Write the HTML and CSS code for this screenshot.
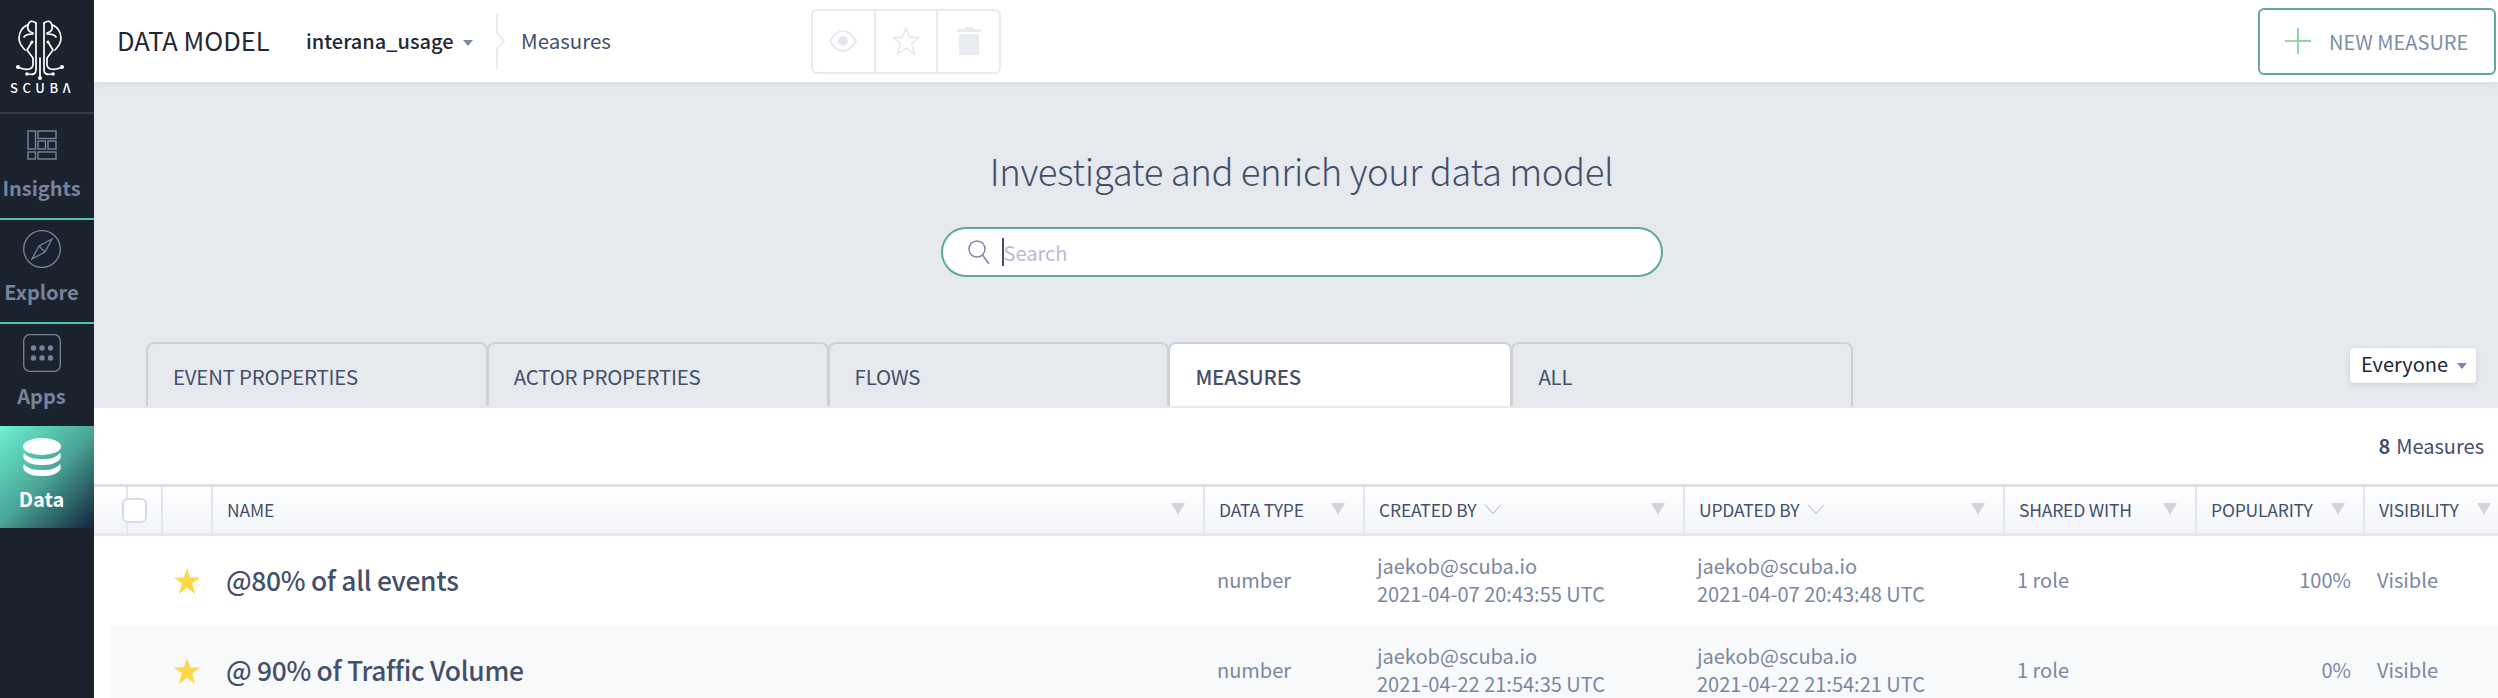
FILE: index.html
```html
<!DOCTYPE html>
<html lang="en">
<head>
    <meta charset="UTF-8">
    <meta name="viewport" content="width=device-width, initial-scale=1.0">
    <title>Data Model</title>
    <link rel="stylesheet" href="styles.css">
</head>
<body>
    <div class="app">
        <nav class="sidebar">
            <div class="logo">
                <svg class="logo-mark" width="94" height="84" viewBox="0 0 94 84" fill="none" stroke="#fff" stroke-width="1.7" stroke-linecap="round" stroke-linejoin="round">
                    <defs>
                        <g id="brainHalf">
                            <path d="M36 23V70C36 74 33 75 28 74"/>
                            <path d="M36 23C32 20 29 21 28 25C23 26 19 32 19 38C19 43 21 46 25 50"/>
                            <path d="M28 25C27 29 29 32 33 33"/>
                            <path d="M24 37C25 35 28 34 33 34"/>
                            <path d="M32 42L27 50L33 58V64C33 69 28 71 20 68"/>
                            <circle cx="18" cy="67" r="2" fill="#fff" stroke="none"/>
                            <circle cx="27" cy="74" r="1.8" fill="#fff" stroke="none"/>
                            <circle cx="32" cy="42" r="1.6" fill="#fff" stroke="none"/>
                        </g>
                    </defs>
                    <use href="#brainHalf"/>
                    <use href="#brainHalf" transform="translate(80 0) scale(-1 1)"/>
                    <path d="M40 58V77"/>
                    <circle cx="40" cy="78" r="2" fill="#fff" stroke="none"/>
                </svg>
                <span class="logo-text">SCUBΛ</span>
            </div>
            <a class="nav-item nav-insights">
                <svg width="30" height="30" viewBox="0 0 30 30" fill="none" stroke="#77839b" stroke-width="1.4">
                    <rect x="1" y="1" width="7.5" height="18"/>
                    <rect x="11" y="1" width="18" height="7.5"/>
                    <rect x="11" y="11" width="7.5" height="8"/>
                    <rect x="21" y="11" width="8" height="8"/>
                    <rect x="1" y="22" width="7.5" height="7"/>
                    <rect x="11" y="22" width="18" height="7"/>
                </svg>
                <span>Insights</span>
            </a>
            <a class="nav-item nav-explore">
                <svg width="38" height="38" viewBox="0 0 38 38" fill="none" stroke="#77839b" stroke-width="1.3">
                    <circle cx="19" cy="19" r="18.3"/>
                    <path d="M29 9L22 22L9 29L16 16Z"/>
                    <path d="M16 16L22 22"/>
                </svg>
                <span>Explore</span>
            </a>
            <a class="nav-item nav-apps">
                <svg width="38" height="38" viewBox="0 0 38 38" fill="none">
                    <rect x="0.7" y="0.7" width="36.6" height="36.6" rx="6" stroke="#77839b" stroke-width="1.3"/>
                    <g fill="#77839b">
                        <circle cx="10.5" cy="14" r="2.7"/>
                        <circle cx="19" cy="14" r="2.7"/>
                        <circle cx="27.5" cy="14" r="2.7"/>
                        <circle cx="10.5" cy="24" r="2.7"/>
                        <circle cx="19" cy="24" r="2.7"/>
                        <circle cx="27.5" cy="24" r="2.7"/>
                    </g>
                </svg>
                <span>Apps</span>
            </a>
            <a class="nav-item nav-data">
                <svg width="38" height="38" viewBox="0 0 38 38" fill="#fff">
                    <ellipse cx="19" cy="8.5" rx="19" ry="8.5"/>
                    <path d="M1 15C5 20 11 21 19 21S33 20 37 15C38 17 38 19 37 21C33 26 26 27 19 27S5 26 1 21C0 19 0 17 1 15Z"/>
                    <path d="M1 26C5 31 11 32 19 32S33 31 37 26C38 28 38 30 37 32C33 37 26 38 19 38S5 37 1 32C0 30 0 28 1 26Z"/>
                </svg>
                <span>Data</span>
            </a>
        </nav>

        <main class="content">
            <header class="topbar">
                <h1 class="page-title">DATA MODEL</h1>
                <div class="dataset">interana_usage<i class="caret"></i></div>
                <svg class="crumb-sep" width="10" height="56" viewBox="0 0 10 56" fill="none" stroke="#e3e6ec" stroke-width="1.5">
                    <path d="M1 0V20L8 28L1 36V56"/>
                </svg>
                <div class="crumb">Measures</div>
                <div class="action-group">
                    <div class="action">
                        <svg width="28" height="24" viewBox="0 0 28 24" fill="none" stroke="#e3e6ec" stroke-width="1.6">
                            <path d="M1 12C5 5 9 2 14 2S23 5 27 12C23 19 19 22 14 22S5 19 1 12Z"/>
                            <circle cx="14" cy="12" r="5" fill="#e3e6ec" stroke="none"/>
                        </svg>
                    </div>
                    <div class="action">
                        <svg width="28" height="28" viewBox="0 0 28 28" fill="none" stroke="#e3e6ec" stroke-width="1.4">
                            <path d="M14 1L17.5 10.5H27L19.5 16.5L22.5 27L14 21L5.5 27L8.5 16.5L1 10.5H10.5Z"/>
                        </svg>
                    </div>
                    <div class="action">
                        <svg width="24" height="28" viewBox="0 0 24 28" fill="#e8ebf0">
                            <path d="M8 0H16V2H24V5H0V2H8Z"/>
                            <path d="M2 7H22V28H2Z"/>
                        </svg>
                    </div>
                </div>
                <button class="new-btn">
                    <svg width="26" height="26" viewBox="0 0 26 26">
                        <defs>
                            <linearGradient id="plusGrad" x1="0" y1="0" x2="1" y2="0">
                                <stop offset="0" stop-color="#a2dc84"/>
                                <stop offset="1" stop-color="#7fd3dc"/>
                            </linearGradient>
                        </defs>
                        <rect x="0" y="12" width="26" height="2" fill="url(#plusGrad)"/>
                        <rect x="12" y="0" width="2" height="26" fill="#8fd9a8"/>
                    </svg>
                    NEW MEASURE
                </button>
            </header>

            <section class="hero">
                <h2 class="hero-title">Investigate and enrich your data model</h2>
                <div class="search">
                    <svg width="22" height="26" viewBox="0 0 22 26" fill="none" stroke="#7d89a3" stroke-width="1.5">
                        <circle cx="9" cy="10" r="8"/>
                        <path d="M14.5 16L21 25"/>
                    </svg>
                    <i class="cursor"></i>
                    <input class="search-input" type="text" placeholder="Search">
                </div>
                <div class="tab-row">
                    <div class="tabs">
                        <div class="tab">EVENT PROPERTIES</div>
                        <div class="tab">ACTOR PROPERTIES</div>
                        <div class="tab">FLOWS</div>
                        <div class="tab active">MEASURES</div>
                        <div class="tab">ALL</div>
                    </div>
                    <div class="scope">Everyone<i class="caret"></i></div>
                </div>
            </section>

            <div class="count"><strong>8</strong> Measures</div>

            <div class="row head">
                <div class="cell"></div>
                <div class="cell check-cell"><i class="checkbox"></i></div>
                <div class="cell"></div>
                <div class="cell">NAME<i class="filter"></i></div>
                <div class="cell">DATA TYPE<i class="filter"></i></div>
                <div class="cell">CREATED BY<svg class="sort" width="18" height="10" viewBox="0 0 18 10" fill="none" stroke="#a6aec0"><path d="M1 0.5L9 9.5L17 0.5"/></svg><i class="filter"></i></div>
                <div class="cell">UPDATED BY<svg class="sort" width="18" height="10" viewBox="0 0 18 10" fill="none" stroke="#a6aec0"><path d="M1 0.5L9 9.5L17 0.5"/></svg><i class="filter"></i></div>
                <div class="cell">SHARED WITH<i class="filter"></i></div>
                <div class="cell">POPULARITY<i class="filter"></i></div>
                <div class="cell">VISIBILITY<i class="filter"></i></div>
            </div>

            <div class="row item">
                <div class="cell"></div>
                <div class="cell"></div>
                <div class="cell star-cell"><svg width="26" height="26" viewBox="0 0 26 26" fill="#fbd84a"><path d="M13 0L16.2 9.6H26L18.2 15.6L21.2 26L13 19.8L4.8 26L7.8 15.6L0 9.6H9.8Z"/></svg></div>
                <div class="cell name">@80% of all events</div>
                <div class="cell">number</div>
                <div class="cell stack"><span>jaekob@scuba.io</span><span>2021-04-07 20:43:55 UTC</span></div>
                <div class="cell stack"><span>jaekob@scuba.io</span><span>2021-04-07 20:43:48 UTC</span></div>
                <div class="cell">1 role</div>
                <div class="cell num">100%</div>
                <div class="cell">Visible</div>
            </div>

            <div class="row item alt">
                <div class="cell"></div>
                <div class="cell star-cell"><svg width="26" height="26" viewBox="0 0 26 26" fill="#fbd84a"><path d="M13 0L16.2 9.6H26L18.2 15.6L21.2 26L13 19.8L4.8 26L7.8 15.6L0 9.6H9.8Z"/></svg></div>
                <div class="cell name">@ 90% of Traffic Volume</div>
                <div class="cell">number</div>
                <div class="cell stack"><span>jaekob@scuba.io</span><span>2021-04-22 21:54:35 UTC</span></div>
                <div class="cell stack"><span>jaekob@scuba.io</span><span>2021-04-22 21:54:21 UTC</span></div>
                <div class="cell">1 role</div>
                <div class="cell num">0%</div>
                <div class="cell">Visible</div>
            </div>
        </main>
    </div>
</body>
</html>
```

FILE: styles.css
```css
* {
    box-sizing: border-box;
}

html, body {
    height: 100%;
    overflow: hidden;
}

body {
    margin: 0;
    font-family: "Noto Sans CJK SC", "Noto Sans", sans-serif;
    color: #44506a;
    background-color: #fff;
}

.app {
    display: flex;
    height: 100vh;
}

/* sidebar */
.sidebar {
    flex: 0 0 94px;
    background-color: #1a222d;
}

.logo {
    height: 114px;
    border-bottom: 2px solid #333b46;
}

.logo-mark {
    display: block;
}

.logo-text {
    display: block;
    width: 82px;
    margin-top: -4px;
    padding-left: 3px;
    text-align: center;
    color: #fff;
    font-size: 13px;
    font-weight: 500;
    line-height: 16px;
    letter-spacing: 4.6px;
}

.nav-item {
    height: 106px;
    padding-right: 11px;
    display: flex;
    flex-direction: column;
    align-items: center;
    color: #77839b;
    font-size: 20px;
    font-weight: 700;
    line-height: 28px;
    border-bottom: 2px solid #4fc4ac;
}

.nav-insights {
    padding-top: 16px;
    gap: 14px;
}

.nav-explore {
    height: 104px;
    padding-top: 10px;
    gap: 10px;
}

.nav-apps {
    height: 102px;
    padding-top: 10px;
    gap: 10px;
    border-bottom: none;
}

.nav-data {
    height: 102px;
    padding-top: 12px;
    gap: 9px;
    color: #fff;
    border-bottom: none;
    background: linear-gradient(135deg, #6cf2d2 0%, #4aa596 50%, #10243a 100%);
}

/* top bar */
.content {
    flex: 1;
    min-width: 0;
}

.topbar {
    height: 82px;
    display: flex;
    align-items: center;
    background-color: #fff;
    position: relative;
    box-shadow: 0 2px 6px rgba(60, 70, 90, 0.08);
}

.page-title {
    margin: 0 0 2px 23px;
    width: 189px;
    font-size: 25.5px;
    font-weight: 400;
    line-height: 30px;
    color: #1f2835;
}

.dataset {
    width: 190px;
    margin-bottom: 2px;
    font-size: 20px;
    font-weight: 500;
    color: #1f2835;
}

.caret {
    display: inline-block;
    margin-left: 9px;
    vertical-align: 3px;
    border-left: 5px solid transparent;
    border-right: 5px solid transparent;
    border-top: 6px solid #7d89a3;
}

.crumb {
    margin-left: 15px;
    margin-bottom: 2px;
    font-size: 20.5px;
    width: 289px;
}

.action-group {
    display: flex;
    width: 190px;
    height: 65px;
    margin-left: 1px;
    border: 2px solid #e9ebf0;
    border-radius: 6px;
}

.action {
    flex: 1;
    display: flex;
    align-items: center;
    justify-content: center;
    border-left: 2px solid #e9ebf0;
}

.action:first-child {
    border-left: none;
}

.new-btn {
    margin-left: auto;
    margin-right: 2px;
    width: 238px;
    height: 67px;
    display: flex;
    align-items: center;
    gap: 18px;
    padding: 0 0 0 25px;
    font-family: inherit;
    font-size: 20px;
    color: #7b8fa6;
    background-color: #fff;
    border: 2px solid #62a893;
    border-radius: 6px;
}

/* search and tabs */
.hero {
    height: 326px;
    padding-top: 65px;
    background-color: #e6e9ee;
    display: flex;
    flex-direction: column;
    align-items: center;
}

.hero-title {
    margin: 0 0 0 11px;
    font-size: 36.5px;
    font-weight: 300;
    letter-spacing: -0.4px;
    line-height: 48px;
    color: #44506a;
}

.search {
    margin: 32px 0 0 11px;
    width: 722px;
    height: 50px;
    display: flex;
    align-items: center;
    padding-left: 25px;
    background-color: #fff;
    border: 2px solid #5fa994;
    border-radius: 25px;
}

.cursor {
    width: 2px;
    height: 28px;
    margin-left: 12px;
    background-color: #44506a;
}

.search-input {
    flex: 1;
    border: none;
    outline: none;
    padding: 0;
    font-family: inherit;
    font-size: 20px;
    background: transparent;
}

.search-input::placeholder {
    color: #b6bdcf;
}

.tab-row {
    align-self: stretch;
    margin-top: 65px;
    display: flex;
    position: relative;
}

.tabs {
    display: flex;
    margin-left: 52px;
    height: 64px;
}

.tab {
    width: 341.8px;
    margin-right: -1px;
    padding: 18px 0 0 25px;
    font-size: 20.4px;
    letter-spacing: -0.2px;
    line-height: 28px;
    border: 2px solid #cfd0d2;
    border-bottom: none;
    border-radius: 8px 8px 0 0;
}

.tab.active {
    width: 344px;
    font-weight: 500;
    background-color: #fff;
}

.scope {
    position: absolute;
    right: 22px;
    top: 6px;
    height: 35px;
    width: 126px;
    padding-left: 11px;
    font-size: 20px;
    line-height: 32px;
    color: #1f2835;
    background-color: #fff;
    border-radius: 4px;
    box-shadow: 0 2px 5px rgba(60, 70, 90, 0.15);
}

.count {
    height: 76px;
    padding-right: 14px;
    padding-bottom: 2px;
    display: flex;
    align-items: center;
    justify-content: flex-end;
    gap: 6px;
    font-size: 20px;
}

.count strong {
    font-weight: 700;
}

/* table */
.row {
    display: grid;
    grid-template-columns: 16px 53px 50px 992px 160px 320px 320px 192px 168px 144px;
}

.head {
    height: 52px;
    border-top: 3px solid #dee1e9;
    border-bottom: 3px solid #e6e8ee;
    background: linear-gradient(#fff, #f2f4f8);
    font-size: 17.5px;
    letter-spacing: -0.2px;
}

.head .cell {
    display: flex;
    align-items: center;
    padding: 0 18px 2px 14px;
    border-right: 2px solid #e3e6ec;
}

.head .cell:last-child {
    border-right: none;
}

.head .check-cell {
    padding: 0 2px 0 0;
    justify-content: center;
}

.checkbox {
    width: 25px;
    height: 25px;
    background-color: #fff;
    border: 2px solid #d7dbe4;
    border-radius: 6px;
}

.filter {
    margin-left: auto;
    border-left: 7px solid transparent;
    border-right: 7px solid transparent;
    border-top: 12px solid #d3d6de;
}

.sort {
    margin-left: 8px;
}

.item {
    height: 90px;
    font-size: 20px;
    color: #7b87a1;
}

.item .cell {
    display: flex;
    align-items: center;
    padding: 0 0 4px 12px;
}

.alt {
    margin-left: 16px;
    grid-template-columns: 53px 50px 992px 160px 320px 320px 192px 168px 144px;
    background-color: #f8f9fb;
}

.item .star-cell {
    padding: 0 0 0 11px;
}

.item .name {
    padding-left: 13px;
    font-size: 26.4px;
    font-weight: 500;
    letter-spacing: -0.3px;
    color: #44506a;
}

.item .stack {
    flex-direction: column;
    align-items: flex-start;
    justify-content: center;
    padding-bottom: 2px;
    line-height: 28px;
}

.item .num {
    justify-content: flex-end;
    padding-right: 14px;
}
```
